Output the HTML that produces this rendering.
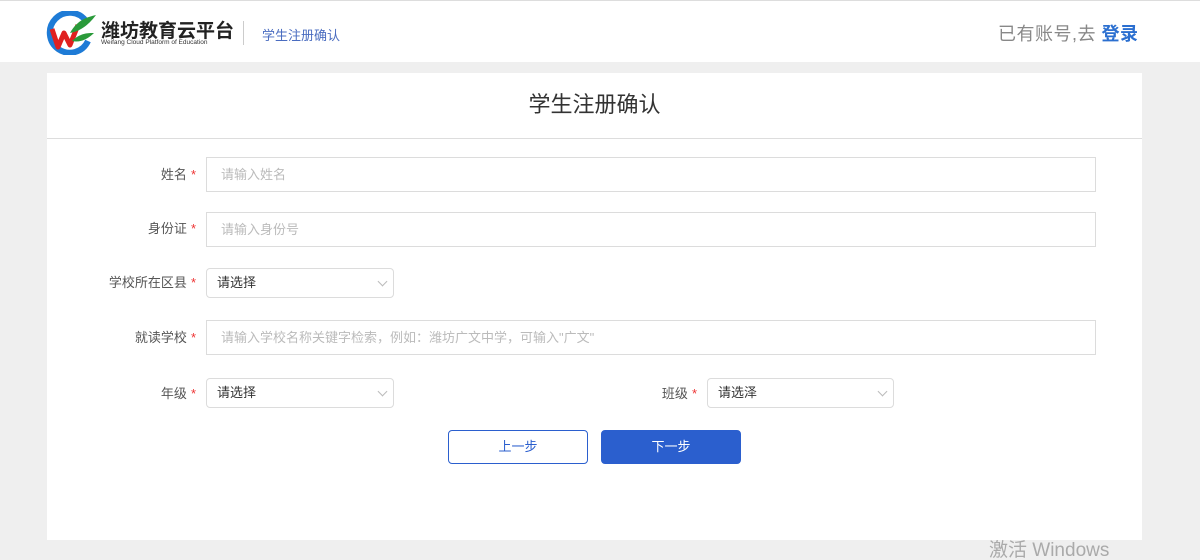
<!DOCTYPE html>
<html><head><meta charset="utf-8"><style>
*{margin:0;padding:0;box-sizing:border-box}
html,body{width:1200px;height:560px;overflow:hidden}
body{background:#efefef;font-family:"Liberation Sans","Noto Sans CJK SC",sans-serif;position:relative;font-size:13px;color:#555}
.hd{position:absolute;left:0;top:0;width:1200px;height:62px;background:#fff;border-top:1px solid #ddd}
.card{position:absolute;left:47px;top:73px;width:1095px;height:467px;background:#fff}
.title{height:66px;border-bottom:1px solid #ddd;text-align:center;line-height:64px;font-size:22px;color:#333}
.lbl{position:absolute;text-align:right;font-size:13px;color:#555}
.lbl b{color:#e33;font-weight:normal;margin-left:4px}
.in{position:absolute;border:1px solid #dcdcdc;height:35px;line-height:33px;padding-left:14px;color:#bbb;font-size:13px}
.sel{position:absolute;border:1px solid #dcdcdc;border-radius:4px;height:30px;line-height:28px;padding-left:10px;color:#333;font-size:13px}
.sel:after{content:"";position:absolute;right:7px;top:9px;width:6px;height:6px;border-right:1px solid #bbb;border-bottom:1px solid #bbb;transform:rotate(45deg)}
.btn{position:absolute;top:430px;height:34px;width:140px;border-radius:4px;text-align:center;line-height:32px;font-size:13px}
</style></head><body>
<div class="hd">
<svg style="position:absolute;left:46px;top:10px" width="50" height="44" viewBox="0 0 50 44">
<path d="M40 10 A20 20 0 1 0 42 30" fill="none" stroke="#1e7bd6" stroke-width="6"/>
<path d="M6 18 L12 36 L18 22 L24 34 L32 14" fill="none" stroke="#e02020" stroke-width="5" stroke-linejoin="round"/>
<path d="M24 22 C32 8 42 6 50 4 C44 12 36 20 24 22Z" fill="#2a9a3a"/>
<path d="M26 30 C34 22 42 22 48 22 C42 28 34 32 26 30Z" fill="#2a9a3a"/>
</svg>
<div style="position:absolute;left:101px;top:15px;font-size:19px;font-weight:bold;color:#222">潍坊教育云平台</div>
<div style="position:absolute;left:101px;top:38px;font-size:6.5px;color:#333;white-space:nowrap">Weifang Cloud Platform of Education</div>
<div style="position:absolute;left:243px;top:20px;width:1px;height:24px;background:#ccc"></div>
<div style="position:absolute;left:262px;top:24px;font-size:13px;color:#4a6cc0">学生注册确认</div>
<div style="position:absolute;left:998px;top:19px;font-size:18px;color:#888;letter-spacing:0.5px">已有账号,去 <span style="color:#2b6fd0;font-weight:bold">登录</span></div>
</div>
<div class="card"><div class="title">学生注册确认</div></div>
<div class="lbl" style="left:100px;width:96px;top:164px">姓名<b>*</b></div>
<div class="in" style="left:206px;top:157px;width:890px">请输入姓名</div>
<div class="lbl" style="left:100px;width:96px;top:218px">身份证<b>*</b></div>
<div class="in" style="left:206px;top:212px;width:890px">请输入身份号</div>
<div class="lbl" style="left:100px;width:96px;top:272px">学校所在区县<b>*</b></div>
<div class="sel" style="left:206px;top:268px;width:188px">请选择</div>
<div class="lbl" style="left:100px;width:96px;top:327px">就读学校<b>*</b></div>
<div class="in" style="left:206px;top:320px;width:890px">请输入学校名称关键字检索，例如：潍坊广文中学，可输入"广文"</div>
<div class="lbl" style="left:100px;width:96px;top:383px">年级<b>*</b></div>
<div class="sel" style="left:206px;top:378px;width:188px">请选择</div>
<div class="lbl" style="left:600px;width:97px;top:383px">班级<b>*</b></div>
<div class="sel" style="left:707px;top:378px;width:187px">请选泽</div>
<div class="btn" style="left:448px;border:1px solid #2b5fce;color:#2b5fce;background:#fff">上一步</div>
<div class="btn" style="left:601px;background:#2b5fce;color:#fff;border:1px solid #2b5fce">下一步</div>
<div style="position:absolute;left:989px;top:539px;font-size:19px;line-height:24px;color:#aaa">激活 Windows</div>
</body></html>
